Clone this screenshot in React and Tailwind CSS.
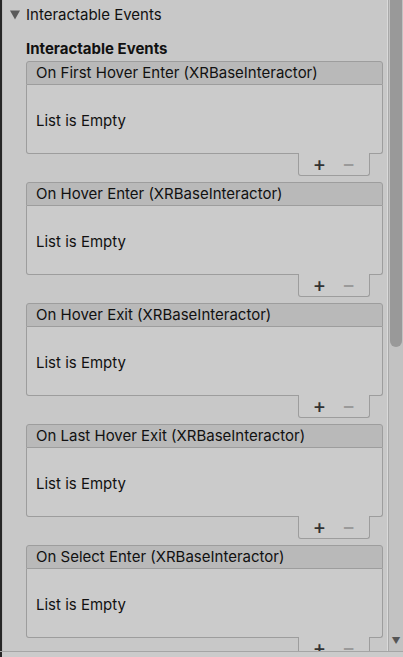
const events = [
  'On First Hover Enter (XRBaseInteractor)',
  'On Hover Enter (XRBaseInteractor)',
  'On Hover Exit (XRBaseInteractor)',
  'On Last Hover Exit (XRBaseInteractor)',
  'On Select Enter (XRBaseInteractor)',
];

function EventList({ title }) {
  return (
    <div className="w-[357px] mb-[6px]">
      {/* Header */}
      <div className="h-[24px] flex items-center pl-[9px] pt-[1px] bg-[#b9b9b9] border border-[#9d9d9d] rounded-t-[3px] text-[15px] text-[#111]">
        {title}
      </div>
      {/* Body */}
      <div className="h-[69px] flex items-center pl-[9px] pt-[5px] bg-[#cbcbcb] border-x border-b border-[#9d9d9d] rounded-b-[3px] text-[15px] text-[#111]">
        List is Empty
      </div>
      {/* Footer */}
      <div className="relative -mt-[1px] ml-auto mr-[13px] w-[72px] h-[23px] flex items-center justify-center gap-[16px] bg-[#cbcbcb] border-x border-b border-[#9d9d9d] rounded-b-[3px]">
        <span className="text-[20px] leading-none text-[#333] font-medium">+</span>
        <span className="text-[20px] leading-none text-[#9a9a9a] font-medium">−</span>
      </div>
    </div>
  );
}

export default function App() {
  return (
    <div className="w-[403px] h-[657px] flex flex-col bg-[#c8c8c8] overflow-hidden" style={{ fontFamily: 'Inter, "Noto Sans", sans-serif' }}>
      <div className="flex flex-1 min-h-0">
        {/* left dark edge */}
        <div className="w-[2px] bg-[#262626]" />
        <div className="w-[1px] bg-[#bdbdbd]" />

        {/* content */}
        <div className="flex-1 min-w-0 overflow-hidden">
          <div className="h-[30px] flex items-center pl-[7px] gap-[6px] text-[15px] text-[#111]">
            <svg width="10" height="10" viewBox="0 0 10 10" className="shrink-0">
              <path d="M0 0.5 L10 0.5 L5 9.5 Z" fill="#5a5a5a" />
            </svg>
            <span>Interactable Events</span>
          </div>
          <div className="pl-[23px]">
            <div className="h-[31px] pt-[8px] flex items-center font-bold text-[15px] text-[#111]">Interactable Events</div>
            {events.map(e => (
              <EventList key={e} title={e} />
            ))}
          </div>
        </div>

        {/* scrollbar */}
        <div className="w-[16px] flex flex-col border-l border-[#dadada] bg-[#c2c2c2]">
          <div className="flex-1 flex border-l border-[#a9a9a9]">
            <div className="flex-1 flex flex-col px-[1px]">
              <div className="h-[347px] bg-[#999999] rounded-b-[6px]" />
              <div className="flex-1" />
              <div className="h-[22px] flex items-center justify-center">
                <span className="text-[9px] text-[#555] leading-none">▼</span>
              </div>
            </div>
          </div>
        </div>
      </div>
      {/* bottom strip */}
      <div className="h-[6px] border-t border-[#a5a5a5] bg-[#cbcbcb] flex">
        <div className="w-[2px] bg-[#262626]" />
      </div>
    </div>
  );
}
